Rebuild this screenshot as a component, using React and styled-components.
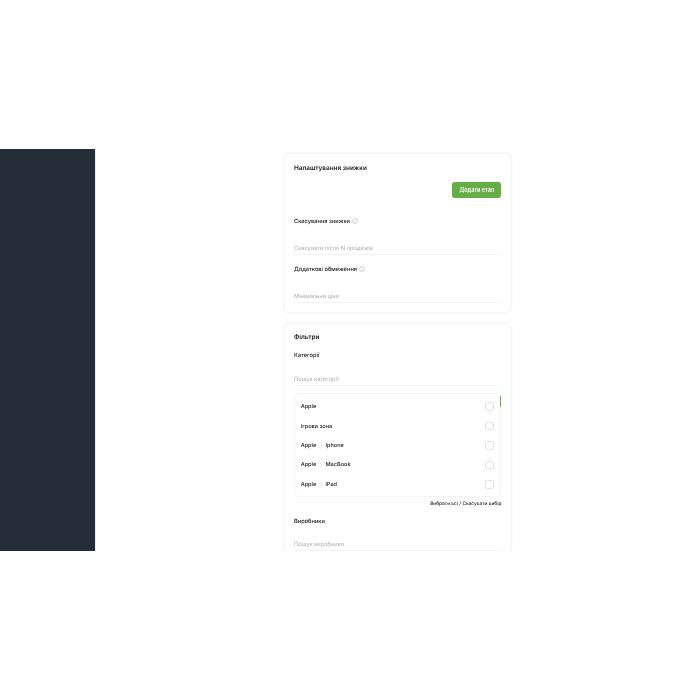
import styled, { createGlobalStyle } from "styled-components";

const GlobalStyle = createGlobalStyle`
  html, body {
    margin: 0;
    padding: 0;
    background: #fff;
    font-family: Inter, "Noto Sans", sans-serif;
    color: #16191d;
    text-rendering: geometricPrecision;
  }
`;

const categories = [
  ["Apple"],
  ["Ігрова зона"],
  ["Apple", "Iphone"],
  ["Apple", "MacBook"],
  ["Apple", "iPad"],
];

function InfoIcon() {
  return (
    <Info viewBox="0 0 12 12" aria-hidden="true">
      <circle cx="6" cy="6" r="5" fill="none" stroke="#8f959b" strokeWidth="0.8" />
      <path d="M6 5.4v3M6 3.4v.9" fill="none" stroke="#8f959b" strokeWidth="0.8" />
    </Info>
  );
}

function Chevron() {
  return (
    <Arrow viewBox="0 0 6 8" aria-hidden="true">
      <path d="M2 1.5 4.5 4 2 6.5" fill="none" stroke="#c6c9cd" strokeWidth="0.6" />
    </Arrow>
  );
}

export default function App() {
  return (
    <>
      <GlobalStyle />
      <Frame>
        <Sidebar />
        <Main>
          <Column>
            <Card>
              <CardTitle>Налаштування знижки</CardTitle>
              <ButtonRow>
                <AddButton>Додати етап</AddButton>
              </ButtonRow>
              <Label $top={19.3}>
                Скасування знижки <InfoIcon />
              </Label>
              <Field $top={17.5}>Скасувати після N продажів</Field>
              <Label $top={10.5}>
                Додаткові обмеження <InfoIcon />
              </Label>
              <Field $top={17.5}>Мінімальна ціна</Field>
            </Card>
            <Card>
              <CardTitle>Фільтри</CardTitle>
              <Label $top={9}>Категорії</Label>
              <Field $top={15}>Пошук категорії</Field>
              <ListBox>
                <Thumb />
                {categories.map((path) => (
                  <Row key={path.join("/")}>
                    <RowName>
                      {path[0]}
                      {path[1] && <Chevron />}
                      {path[1]}
                    </RowName>
                    <Check />
                  </Row>
                ))}
              </ListBox>
              <Actions>Вибрати всі / Скасувати вибір</Actions>
              <Label $top={9.2}>Виробники</Label>
              <Field $top={14.3}>Пошук виробника</Field>
            </Card>
          </Column>
        </Main>
      </Frame>
    </>
  );
}

const Frame = styled.div`
  display: flex;
  height: 402px;
  margin-top: 149px;
  overflow: hidden;
`;

const Sidebar = styled.aside`
  box-sizing: border-box;
  flex: 0 0 96px;
  background: #252d39;
  border-right: 1px solid #e9ebed;
`;

const Main = styled.main`
  flex: 1;
  padding: 3.8px 0 0 188px;
`;

const Column = styled.div`
  display: flex;
  flex-direction: column;
  gap: 10px;
  width: 227.4px;
  will-change: transform;
`;

const Card = styled.section`
  box-sizing: border-box;
  padding: 9px;
  background: #fff;
  border: 1px solid #f5f6f7;
  border-radius: 6px;
  box-shadow: 0 0 3px rgba(30, 40, 50, 0.08);
`;

const CardTitle = styled.h2`
  margin: 0;
  padding-top: 0.5px;
  font-size: 6.4px;
  line-height: 9px;
  font-weight: 600;
`;

const ButtonRow = styled.div`
  display: flex;
  justify-content: flex-end;
  margin-top: 9.5px;
`;

const AddButton = styled.button`
  width: 49px;
  height: 16px;
  padding: 0;
  border: none;
  border-radius: 3px;
  background: #64ae45;
  color: #fff;
  font-family: inherit;
  font-size: 5.5px;
  font-weight: 600;
`;

const Label = styled.div`
  display: flex;
  align-items: center;
  gap: 2px;
  margin-top: ${(p) => p.$top}px;
  font-size: 5.7px;
  line-height: 9px;
  font-weight: 500;
`;

const Info = styled.svg`
  width: 6px;
  height: 6px;
  margin-bottom: 1px;
`;

const Field = styled.div`
  margin-top: ${(p) => p.$top}px;
  padding-bottom: 1px;
  border-bottom: 1px solid #f2f3f4;
  font-size: 5.7px;
  line-height: 9px;
  color: #a9adb2;
`;

const ListBox = styled.div`
  position: relative;
  box-sizing: border-box;
  height: 103.6px;
  margin-top: 7px;
  padding: 2.8px 6.6px 0 5.7px;
  border: 1px solid #f4f5f6;
  border-radius: 5px;
`;

const Thumb = styled.span`
  position: absolute;
  top: 2.2px;
  right: -1px;
  width: 1.3px;
  height: 11px;
  background: #64ae45;
`;

const Row = styled.div`
  display: flex;
  align-items: center;
  justify-content: space-between;
  height: 19.4px;
`;

const RowName = styled.span`
  display: flex;
  align-items: center;
  padding-top: 1px;
  font-size: 5.6px;
  font-weight: 500;
`;

const Arrow = styled.svg`
  width: 6px;
  height: 8px;
  margin: 0 1.6px;
`;

const Check = styled.span`
  box-sizing: border-box;
  width: 8.6px;
  height: 8.6px;
  border: 1px solid #e2e4e6;
  border-radius: 2px;
`;

const Actions = styled.div`
  margin-top: 3px;
  text-align: right;
  font-size: 4.8px;
  line-height: 8px;
  font-weight: 500;
`;
